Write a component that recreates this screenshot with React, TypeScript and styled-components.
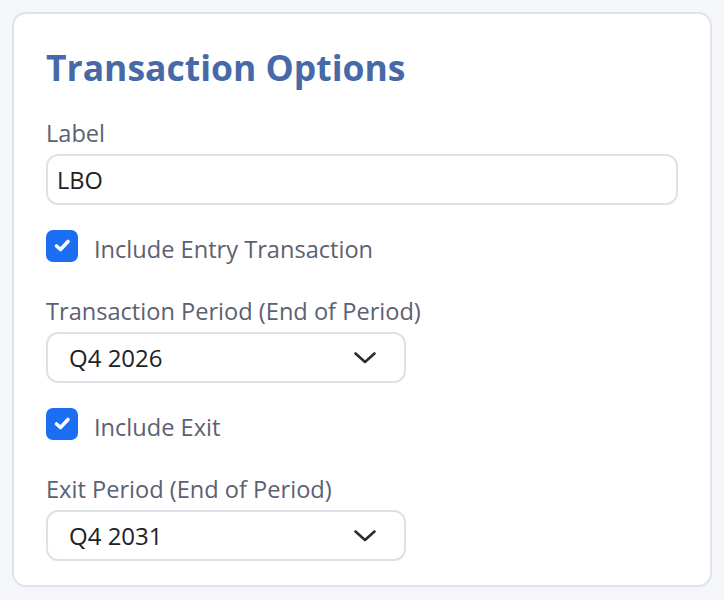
import styled, { createGlobalStyle } from "styled-components";

const GlobalStyle = createGlobalStyle`
  html, body {
    margin: 0;
    padding: 0;
    background: #f5f6fa;
  }
  body {
    font-family: "Open Sans", "Noto Sans", sans-serif;
  }
`;

const Page = styled.div`
  padding: 12px;
  width: 700px;
`;

const Card = styled.section`
  background: #fff;
  border: 2px solid #e1e3ec;
  border-radius: 14px;
  padding: 33px 32px 24px;
  display: flex;
  flex-direction: column;
`;

const Title = styled.h2`
  margin: 0 0 32px;
  font-size: 35.5px;
  line-height: 40px;
  font-weight: 700;
  color: #4769a7;
`;

const FieldLabel = styled.label`
  display: block;
  font-size: 23.6px;
  line-height: 28px;
  color: #5b6172;
  margin-bottom: 7px;
`;

const TextInput = styled.div`
  box-sizing: border-box;
  height: 51px;
  border: 2px solid #dfe1e6;
  border-radius: 12px;
  padding: 0 9px;
  display: flex;
  align-items: center;
  font-size: 23.6px;
  color: #222;
`;

const SelectBox = styled.div`
  box-sizing: border-box;
  width: 360px;
  height: 51px;
  border: 2px solid #dfe1e6;
  border-radius: 12px;
  padding: 0 28px 0 21px;
  display: flex;
  align-items: center;
  justify-content: space-between;
  font-size: 24px;
  color: #222;
`;

const CheckRow = styled.div<{ $after: number }>`
  display: flex;
  align-items: center;
  gap: 16px;
  height: 32px;
  margin: 25px 0 ${(p) => p.$after}px;
  font-size: 23.6px;
  color: #5b6172;
`;

const CheckText = styled.span`
  line-height: 32px;
  padding-top: 5px;
`;

const Box = styled.span`
  width: 32px;
  height: 32px;
  border-radius: 7px;
  background: #1b6ef3;
  display: flex;
  align-items: center;
  justify-content: center;
  flex-shrink: 0;
`;

function Checkbox({ label, after }: { label: string; after: number }) {
  return (
    <CheckRow $after={after}>
      <Box>
        <svg width="32" height="32" viewBox="0 0 32 32">
          <polyline
            points="10.5,16 14.5,19.5 22,11.5"
            fill="none"
            stroke="#fff"
            strokeWidth="3.6"
            strokeLinecap="round"
            strokeLinejoin="round"
          />
        </svg>
      </Box>
      <CheckText>{label}</CheckText>
    </CheckRow>
  );
}

function Chevron() {
  return (
    <svg width="22" height="12" viewBox="0 0 22 12">
      <polyline
        points="1.5,1.5 11,10 20.5,1.5"
        fill="none"
        stroke="#2b2d31"
        strokeWidth="2.6"
        strokeLinecap="round"
        strokeLinejoin="round"
      />
    </svg>
  );
}

export default function App() {
  return (
    <Page>
      <GlobalStyle />
      <Card>
        <Title>Transaction Options</Title>
        <FieldLabel>Label</FieldLabel>
        <TextInput>LBO</TextInput>
        <Checkbox label="Include Entry Transaction" after={35} />
        <FieldLabel>Transaction Period (End of Period)</FieldLabel>
        <SelectBox>
          Q4 2026
          <Chevron />
        </SelectBox>
        <Checkbox label="Include Exit" after={35} />
        <FieldLabel>Exit Period (End of Period)</FieldLabel>
        <SelectBox>
          Q4 2031
          <Chevron />
        </SelectBox>
      </Card>
    </Page>
  );
}
